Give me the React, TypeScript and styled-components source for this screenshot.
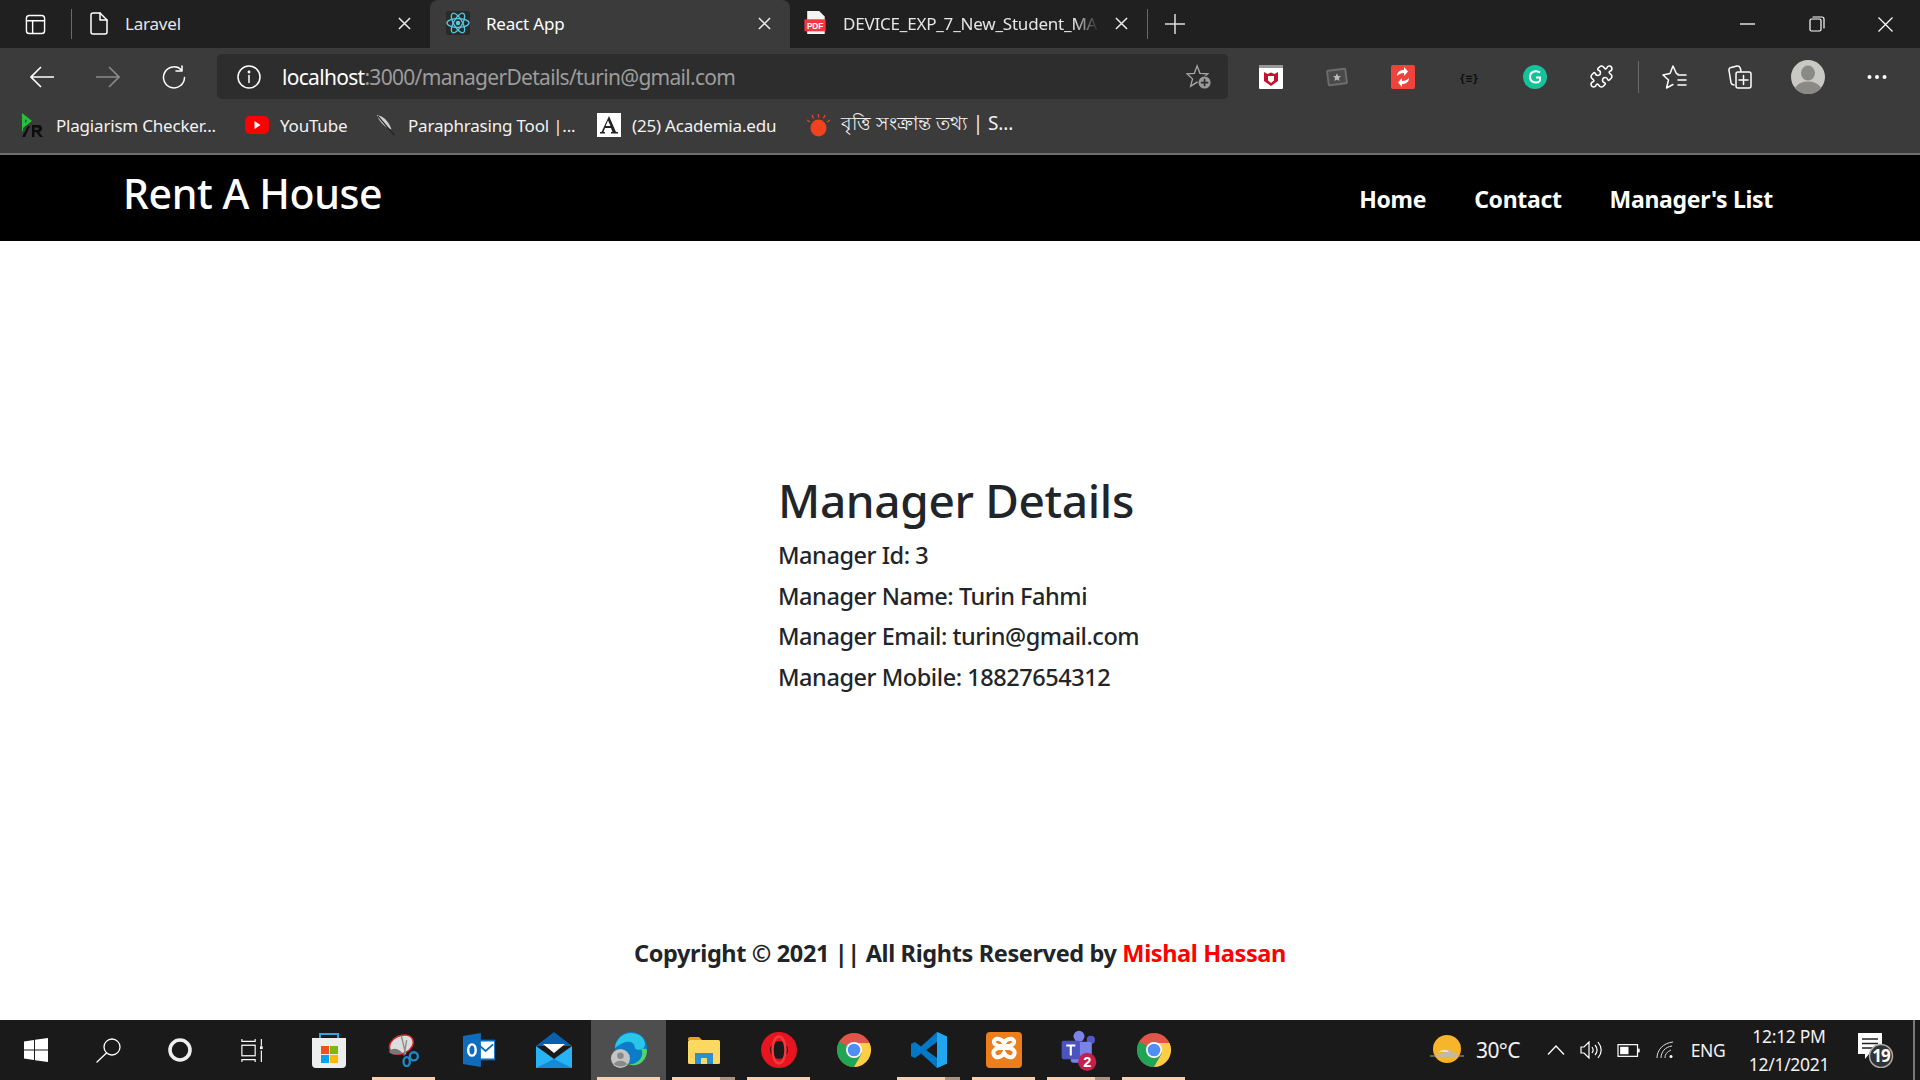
import React from "react";
import styled, { createGlobalStyle } from "styled-components";
import { Puzzle as PuzzleGlyph } from "lucide-react";

const Global = createGlobalStyle`
  html, body { margin: 0; padding: 0; background: #fff; }
  #root { width: 1920px; height: 1080px; overflow: hidden; }
  * { box-sizing: border-box; }
`;
const sans = `"Noto Sans", "Open Sans", "Liberation Sans", "DejaVu Sans", sans-serif`;

const Page = styled.div`
  width: 1920px; height: 1080px; display: flex; flex-direction: column;
  font-family: ${sans}; overflow: hidden;
`;
const TabStrip = styled.div`
  height: 48px; background: #202020; display: flex; align-items: stretch; flex: none;
`;
const StripButton = styled.div<{ $w: number }>`
  width: ${p => p.$w}px; flex: none; display: flex; align-items: center; justify-content: center;
`;
const StripDivider = styled.div`
  width: 1px; height: 30px; background: #6a6a6a; align-self: center; flex: none;
`;
const Tab = styled.div<{ $active?: boolean; $w: number; $pad: number }>`
  width: ${p => p.$w}px; flex: none; display: flex; align-items: center;
  padding: 0 19px 2px ${p => p.$pad}px; gap: 16px; color: ${p => (p.$active ? "#fff" : "#e6e6e6")};
  background: ${p => (p.$active ? "#3b3b3b" : "transparent")};
  border-radius: 8px 8px 0 0; font-size: 17px; letter-spacing: -0.2px;
`;
const TabTitle = styled.span`
  flex: 1; white-space: nowrap; min-width: 0;
`;
const FadedTitle = styled(TabTitle)`
  -webkit-mask-image: linear-gradient(90deg, #000 90%, transparent 100%);
  mask-image: linear-gradient(90deg, #000 90%, transparent 100%);
`;
const Spacer = styled.div`flex: 1;`;
const Chrome = styled.div`
  height: 105px; background: #3b3b3b; flex: none; display: flex; flex-direction: column;
`;
const ToolRow = styled.div`
  height: 57px; padding: 6px 0 0 9px; display: flex; align-items: flex-start; flex: none;
`;
const NavIcon = styled.div`
  width: 66px; height: 45px; display: flex; align-items: center; justify-content: center; flex: none;
`;
const AddressBar = styled.div`
  margin-left: 10px; width: 1011px; height: 45px; background: #2d2d2d; border-radius: 5px; flex: none;
  display: flex; align-items: center; padding: 0 16px 0 20px; margin-right: 10px;
`;
const UrlText = styled.div`
  margin-left: 21px; flex: 1; font-size: 21px; letter-spacing: -0.7px; color: #9c9c9c; white-space: nowrap;
`;
const UrlHost = styled.span`color: #fff;`;
const ExtIcon = styled.div<{ $w?: number }>`
  width: ${p => p.$w ?? 66}px; height: 45px; display: flex; align-items: center; justify-content: center; flex: none;
`;
const ToolDivider = styled.div`
  width: 1px; height: 32px; background: #6a6a6a; margin: 7px 2px 0 4px; flex: none;
`;
const Bookmarks = styled.div`
  height: 48px; padding: 0 0 8px 20px; display: flex; align-items: center; flex: none;
`;
const Bookmark = styled.div<{ $w: number }>`
  width: ${p => p.$w}px; flex: none; display: flex; align-items: center; gap: 11px;
  color: #f2f2f2; font-size: 17px; letter-spacing: -0.2px; white-space: nowrap;
`;
const BengaliTitle = styled.span`font-size: 19px; letter-spacing: -0.1px;`;
const ChromeEdge = styled.div`height: 2px; background: #6e6e6e; flex: none;`;
const Navbar = styled.nav`
  height: 86px; background: #000; color: #fff; display: flex; align-items: flex-start; flex: none;
  padding: 0 147px 0 123px;
`;
const Brand = styled.div`
  font-size: 41px; font-weight: 500; letter-spacing: -0.4px; line-height: 52px; margin-top: 12px; flex: 1;
`;
const NavLinks = styled.div`
  display: flex; gap: 48px; margin-top: 26px;
`;
const NavLink = styled.a`
  color: #fff; font-size: 23px; font-weight: 700; letter-spacing: -0.32px; line-height: 36px; white-space: nowrap;
`;
const Main = styled.main`
  flex: 1; background: #fff; display: flex; flex-direction: column; color: #212529;
`;
const Details = styled.section`
  padding: 229px 0 0 778px; flex: 1;
`;
const Heading = styled.h1`
  margin: 0 0 5px; font-size: 46px; font-weight: 500; line-height: 60px; letter-spacing: -0.35px;
`;
const DetailLine = styled.p`
  margin: 0; font-size: 23.5px; line-height: 40.6px; letter-spacing: -0.45px; font-weight: 500; white-space: nowrap;
`;
const Footer = styled.footer`
  text-align: center; font-size: 23.5px; font-weight: 700; line-height: 36px; letter-spacing: -0.37px;
  height: 85px; flex: none;
`;
const Credit = styled.span`color: #f00;`;
const Taskbar = styled.div`
  height: 60px; background: #1a1a1a; flex: none; display: flex; align-items: stretch; color: #f2f2f2;
`;
const SysButton = styled.div`
  width: 72px; flex: none; display: flex; align-items: center; justify-content: center;
`;
const TaskGap = styled.div`width: 3px; flex: none;`;
const TaskApp = styled.div<{ $active?: boolean; $open?: boolean; $stack?: boolean }>`
  width: 75px; flex: none; display: flex; align-items: center; justify-content: center;
  padding-top: 3px;
  background: ${p => (p.$active ? "#4e4e4e" : "transparent")};
  border-bottom: 3px solid transparent;
  border-image: ${p =>
    p.$open
      ? p.$stack
        ? "linear-gradient(90deg, transparent 7px, #f7cfb1 7px, #f7cfb1 54px, #a99382 54px, #a99382 68px, transparent 68px) 1"
        : "linear-gradient(90deg, transparent 7px, #f7cfb1 7px, #f7cfb1 68px, transparent 68px) 1"
      : "none"};
`;
const Tray = styled.div`
  flex: 1; display: flex; align-items: center; justify-content: flex-end; padding-right: 5px;
`;
const TrayItem = styled.div<{ $w: number; $after?: number }>`
  width: ${p => p.$w}px; flex: none; display: flex; align-items: center; justify-content: center;
  margin-right: ${p => p.$after ?? 0}px;
`;
const Temp = styled.span`font-size: 21px; letter-spacing: -0.6px; white-space: nowrap;`;
const Lang = styled.span`font-size: 17.5px; letter-spacing: -0.5px;`;
const Clock = styled.div`
  width: 112px; flex: none; display: flex; flex-direction: column; align-items: center;
  font-size: 17.5px; letter-spacing: -0.3px; line-height: 28px; white-space: nowrap;
`;
const TrayEdge = styled.div`width: 2px; height: 60px; background: #777; flex: none; margin-left: 4px;`;

const S = { fill: "none", stroke: "#fff", strokeWidth: 1.5, strokeLinecap: "round" as const, strokeLinejoin: "round" as const };
const Close = () => (<svg width="13" height="13" viewBox="0 0 14 14" style={{ flex: "none" }}><path d="M1 1l12 12M13 1L1 13" stroke="#eee" strokeWidth="1.6" /></svg>);
const TabsIcon = () => (<svg width="21" height="21" viewBox="0 0 22 22" {...S}><rect x="1.5" y="1.500" width="19" height="19" rx="3" /><path d="M1.5 7h19M8 7v13.500" /></svg>);
const DocIcon = () => (<svg width="20" height="23" viewBox="0 0 18 23" {...S} style={{ flex: "none" }}><path d="M3 1h7l7 7v12a2 2 0 0 1-2 2H3a2 2 0 0 1-2-2V3a2 2 0 0 1 2-2z" /><path d="M10 1v7h7" /></svg>);
const ReactIcon = () => (<svg width="24" height="24" viewBox="0 0 24 24" style={{ flex: "none" }}><rect width="24" height="24" rx="2" fill="#2a2a2a" /><g fill="none" stroke="#55c8e4" strokeWidth="1.3"><ellipse cx="12" cy="12" rx="11" ry="4.3" /><ellipse cx="12" cy="12" rx="11" ry="4.3" transform="rotate(60 12 12)" /><ellipse cx="12" cy="12" rx="11" ry="4.3" transform="rotate(120 12 12)" /></g><circle cx="12" cy="12" r="2.2" fill="#55c8e4" /></svg>);
const PdfIcon = () => (<svg width="23" height="24" viewBox="0 0 24 26" style={{ flex: "none" }}><path d="M3 0h13l6 6v19H3z" fill="#f4f4f4" /><rect y="9" width="23" height="13" fill="#f5353f" /><text x="11.5" y="19" fontSize="9" fontWeight="700" fill="#fff" textAnchor="middle" fontFamily="Liberation Sans">PDF</text></svg>);
const Plus = () => (<svg width="20" height="20" viewBox="0 0 20 20"><path d="M10 0v20M0 10h20" stroke="#ddd" strokeWidth="1.5" /></svg>);
const WinMin = () => (<svg width="15" height="2"><path d="M0 1h15" stroke="#fff" strokeWidth="1.3" /></svg>);
const WinMax = () => (<svg width="16" height="16" viewBox="0 0 16 16" {...S} strokeWidth={1.2}><rect x="1" y="3" width="11" height="12" rx="1.5" /><path d="M4 1h9a2 2 0 0 1 2 2v9" /></svg>);
const WinClose = () => (<svg width="15" height="15" viewBox="0 0 15 15"><path d="M.5.5l14 14M14.500.5l-14 14" stroke="#fff" strokeWidth="1.2" /></svg>);
const Back = ({ c = "#fff" }: { c?: string }) => (<svg width="24" height="22" viewBox="0 0 24 22" fill="none" stroke={c} strokeWidth="1.6"><path d="M1 11h23M11 1L1 11l10 10" /></svg>);
const Forward = () => (<svg width="24" height="22" viewBox="0 0 24 22" fill="none" stroke="#8a8a8a" strokeWidth="1.6"><path d="M23 11H0M13 1l10 10-10 10" /></svg>);
const Refresh = () => (<svg width="24" height="24" viewBox="0 0 24 24" {...S}><path d="M19.500 5A10.500 10.500 0 1 0 22.500 12.500" /><path d="M20 1v5h-6" /></svg>);
const Info = () => (<svg width="24" height="24" viewBox="0 0 24 24" {...S} style={{ flex: "none" }}><circle cx="12" cy="12" r="11" /><path d="M12 10.5v7" /><circle cx="12" cy="7" r=".7" fill="#fff" /></svg>);
const FavAdd = () => (<svg width="26" height="26" viewBox="0 0 28 28" style={{ flex: "none" }}><path d="M12 2l3 8 8.500.5-6.500 5.500 2 8-7-4.500-7 4.500 2-8L1 10.500 9 10z" fill="none" stroke="#a8a8a8" strokeWidth="1.4" /><circle cx="20" cy="20" r="7" fill="#9a9a9a" stroke="#2d2d2d" /><path d="M20 16v8M16 20h8" stroke="#2d2d2d" strokeWidth="1.8" /></svg>);
const PR = () => (<svg width="25" height="25" viewBox="0 0 25 25" style={{ flex: "none" }}><path d="M2 0l10 8-9 7v3H2z" fill="#25c13c" /><path d="M5 6l2 2-2 2z" fill="#3b3b3b" /><path d="M2 24l6-11h2L5 24z" fill="#0d0d0d" /><path d="M12 24V12h6a3.500 3.500 0 0 1 1 7l4 5h-3l-4-5h-1.500v5zM14.500 14.500v2.500h3a1.200 1.200 0 0 0 0-2.500z" fill="#0d0d0d" /></svg>);
const YT = () => (<svg width="24" height="18" viewBox="0 0 24 18" style={{ flex: "none" }}><rect width="24" height="18" rx="5" fill="#f00" /><path d="M9.500 5l6 4-6 4z" fill="#fff" /></svg>);
const Quill = () => (<svg width="22" height="22" viewBox="0 0 24 24" style={{ flex: "none" }}><path d="M2 1c8 1 14 9 16 16-6-2-13-8-16-16z" fill="#d0d0d0" /><path d="M3 2l18 21" stroke="#222" strokeWidth="1.4" /></svg>);
const AIcon = () => (<svg width="24" height="24" viewBox="0 0 24 24" style={{ flex: "none" }}><rect width="24" height="24" fill="#fff" /><path d="M12 3l7 16h2v1.500h-7V19h1.500l-1.500-4H8l-1.500 4H8v1.500H3V19h1.500zM11 7.500L8.700 13h4.800z" fill="#222" /></svg>);
const Bulb = () => (<svg width="23" height="23" viewBox="0 0 23 23" style={{ flex: "none" }}><ellipse cx="11.500" cy="14" rx="8" ry="8.500" fill="#f0421f" /><path d="M11.500 0v3.500M5 1l1.500 3.500M18 1l-1.500 3.500M0 6l3 2M23 6l-3 2" stroke="#f0421f" strokeWidth="1.3" /></svg>);
const McAfee = () => (<svg width="24" height="24" viewBox="0 0 24 24"><rect width="24" height="24" rx="1" fill="#fff" /><rect width="24" height="3" fill="#999" /><path d="M5 7l3.500 2L12 7.500 15.500 9 19 7v9l-7 5-7-5z" fill="#c8102e" /><path d="M9 11h6v4.500L12 18l-3-2.500z" fill="#fff" /></svg>);
const StarPhoto = () => (<svg width="22" height="22" viewBox="0 0 24 24"><rect x="2" y="4" width="20" height="16" rx="1" fill="#4a4a4a" stroke="#6d6d6d" strokeWidth="2" transform="rotate(-7 12 12)" /><path d="M12 8l1.300 3 3.200.2-2.500 2 .9 3.100-2.900-1.700-2.900 1.700.9-3.100-2.500-2 3.200-.2z" fill="#bbb" /></svg>);
const SyncRed = () => (<svg width="24" height="24" viewBox="0 0 24 24"><rect width="24" height="24" rx="2" fill="#f1423c" /><path d="M6 11c0-4 3-6 7-6V2l4 4.500-4 4.500V8c-3 0-5 1-7 3zM18 13c0 4-3 6-7 6v3l-4-4.500L11 13v3c3 0 5-1 7-3z" fill="#fff" /></svg>);
const Braces = () => (<svg width="22" height="14" viewBox="0 0 22 14"><text x="11" y="11.500" fontSize="11" fontWeight="700" textAnchor="middle" fill="#0d0d0d" fontFamily="DejaVu Sans Mono">{"{≡}"}</text></svg>);
const Grammarly = () => (<svg width="24" height="24" viewBox="0 0 24 24"><circle cx="12" cy="12" r="12" fill="#15c39a" /><path d="M17 7.500c-3-2.500-10-1.500-10 4.500s8 7 10 3.500V12.500h-4" fill="none" stroke="#fff" strokeWidth="2" /></svg>);
const FavStar = () => (<svg width="25" height="24" viewBox="0 0 25 24" {...S}><path d="M16 9l-1.500-.3L11 1 8 8.500 1 10l5.500 5-2 8 6.500-3.500" /><path d="M16 10h8M16 15h8M16 20h8" /></svg>);
const Collections = () => (<svg width="24" height="25" viewBox="0 0 24 25" {...S}><path d="M6 21c-1.500 0-2.500-.8-3-2.300L1 6.500C.7 5 1.500 3.800 3 3.400L9 2c1.500-.3 2.800.5 3.200 2l.8 3" /><rect x="8" y="8" width="15" height="16" rx="2" /><path d="M15.500 11.500v9M11 16h9" /></svg>);
const Profile = () => (<svg width="34" height="34" viewBox="0 0 34 34"><circle cx="17" cy="17" r="17" fill="#c8c8c4" /><ellipse cx="17" cy="13" rx="7" ry="7.500" fill="#8a8986" /><path d="M4 28c3-5 8-6.500 13-6.500S27 23 30 28c-3 4-8 6-13 6S7 32 4 28z" fill="#8a8986" /></svg>);
const More = () => (<svg width="20" height="6" viewBox="0 0 20 6" fill="#fff"><circle cx="2.500" cy="3" r="2" /><circle cx="10" cy="3" r="2" /><circle cx="17.500" cy="3" r="2" /></svg>);

const WinLogo = () => (<svg width="24" height="24" viewBox="0 0 24 24" fill="#fff"><path d="M0 3.500l10-1.500v9.500H0zM11 1.800L24 0v11.500H11zM0 12.500h10V22L0 20.500zM11 12.500h13V24l-13-1.800z" /></svg>);
const Search = () => (<svg width="25" height="25" viewBox="0 0 25 25" {...S} strokeWidth={1.3}><circle cx="16" cy="9" r="8" /><path d="M10.500 15L1 24" /></svg>);
const Cortana = () => (<svg width="24" height="24" viewBox="0 0 24 24"><circle cx="12" cy="12" r="10" fill="none" stroke="#eee" strokeWidth="3.600" /></svg>);
const TaskView = () => (<svg width="23" height="23" viewBox="0 0 26 24" preserveAspectRatio="none" fill="none" stroke="#fff" strokeWidth="1.300"><path d="M1 0v2.500h15V0M1 24v-2.500h15V24" /><rect x="1" y="6.500" width="15" height="11" /><path d="M23 0v7M23 12v12" /><rect x="21.500" y="7.500" width="3" height="3" fill="#fff" stroke="none" /></svg>);
const Store = () => (<svg width="36" height="36" viewBox="0 0 36 36"><path d="M9 7V2h18v5" fill="none" stroke="#2ba8e8" strokeWidth="2" /><path d="M1 6h34v26a4 4 0 0 1-4 4H5a4 4 0 0 1-4-4z" fill="#eee" /><rect x="10" y="14" width="8" height="8" fill="#f25022" /><rect x="19" y="14" width="8" height="8" fill="#7fba00" /><rect x="10" y="23" width="8" height="8" fill="#00a4ef" /><rect x="19" y="23" width="8" height="8" fill="#ffb900" /></svg>);
const Snip = () => (<svg width="34" height="34" viewBox="0 0 36 38"><ellipse cx="15" cy="13" rx="14" ry="10" fill="#ddd" stroke="#d8232a" strokeWidth="1.600" transform="rotate(-25 15 13)" /><path d="M1 21c4-5 10-4 15 1-6 3-12 3-15-1z" fill="#777" /><path d="M15 3l5 21M21 8l-3 17" stroke="#8a8a8a" strokeWidth="1.500" /><circle cx="29" cy="26" r="4.500" fill="none" stroke="#1e88c8" strokeWidth="2.600" /><ellipse cx="21" cy="32" rx="3.500" ry="5" fill="none" stroke="#1e88c8" strokeWidth="2.600" /></svg>);
const Outlook = () => (<svg width="32" height="34" viewBox="0 0 34 36"><rect x="14" y="8" width="20" height="20" fill="#fff" stroke="#0f6cbd" strokeWidth="2" /><path d="M16 12l8 7 8-7" fill="none" stroke="#0f6cbd" strokeWidth="2" /><path d="M0 3l19-3v36L0 33z" fill="#0f6cbd" /><ellipse cx="9.500" cy="18" rx="4" ry="6" fill="none" stroke="#fff" strokeWidth="2.600" /></svg>);
const Mail = () => (<svg width="36" height="36" viewBox="0 0 36 36"><path d="M0 14L18 0l18 14z" fill="#0a5fae" /><path d="M7 12h22l-11 9z" fill="#fff" /><path d="M0 14l18 13 18-13v22H0z" fill="#28b4f4" /><path d="M0 36l18-9 18 9z" fill="#1489d6" /></svg>);
const Edge = () => (<svg width="38" height="38" viewBox="0 0 40 40"><circle cx="22" cy="18" r="17" fill="#0c7bc8" /><path d="M5 18C7 5 20-2 32 5c6 4 6 12 2 14-4 2-8 0-8-2 0-5-6-7-11-5C10 14 6 17 5 18z" fill="#29c6e8" /><path d="M39 20c0 12-10 19-20 15 8 1 18-6 14-16 2 0 5-1 6 1z" fill="#4ad66d" /><circle cx="11" cy="29" r="10" fill="#c4c4c4" /><circle cx="11" cy="26" r="3.500" fill="#8a8a8a" /><path d="M4 35c2-5 12-5 14 0-3 3-10 3-14 0z" fill="#8a8a8a" /></svg>);
const Folder = () => (<svg width="32" height="27" viewBox="0 0 32 27"><path d="M0 2a2 2 0 0 1 2-2h9l3 3H0z" fill="#e2a70f" /><rect y="3" width="32" height="24" rx="1.500" fill="#fbd860" /><path d="M7 27V16h18v11h-6v-6h-6v6z" fill="#2b8fd8" /></svg>);
const Opera = () => (<svg width="36" height="36" viewBox="0 0 36 36"><ellipse cx="18" cy="18" rx="13.500" ry="13.500" fill="none" stroke="#e8141f" strokeWidth="9" /><ellipse cx="18" cy="18" rx="6.500" ry="13.500" fill="none" stroke="#f33a40" strokeWidth="2.500" /></svg>);
const ChromeLogo = () => (<svg width="34" height="34" viewBox="0 0 34 34"><circle cx="17" cy="17" r="17" fill="#e0574a" /><path d="M17 17L2.300 8.500A17 17 0 0 0 17 34l8.500-14.700z" fill="#22a455" /><path d="M17 10h15.500A17 17 0 0 1 17 34l8-14z" fill="#fccf47" /><circle cx="17" cy="17" r="8" fill="#fff" /><circle cx="17" cy="17" r="6.300" fill="#4f8ef5" /></svg>);
const VSCode = () => (<svg width="36" height="36" viewBox="0 0 36 40" preserveAspectRatio="none"><path d="M26 0l10 5v30l-10 5-16-16-6 5-4-2v-14l4-2 6 5z" fill="#0078c8" /><path d="M26 0l10 5v30l-10 5z" fill="#22a7ef" /><path d="M26 11v18l-11-9z" fill="#1a1a1a" /></svg>);
const Xampp = () => (<svg width="36" height="36" viewBox="0 0 36 36"><rect width="36" height="36" rx="4" fill="#ee7d1c" /><path d="M18 11c-2-4-8-6-10-2-1 3 2 4 4 5h5v2h-5c-3 1-6 3-4 7 2 4 8 2 10-2 2 4 8 6 10 2 2-4-1-6-4-7h-5v-2h5c2-1 5-2 4-5-2-4-8-2-10 2z" fill="none" stroke="#fff" strokeWidth="4" /></svg>);
const Teams = () => (<svg width="40" height="42" viewBox="0 0 42 46"><circle cx="34" cy="12" r="4.500" fill="#5059c9" /><circle cx="21" cy="8" r="6" fill="#7b83eb" /><rect x="12" y="14" width="23" height="23" rx="3" fill="#7b83eb" /><rect x="2" y="13" width="20" height="20" rx="2" fill="#4b53bc" /><path d="M7 18h10M12 18v11" stroke="#fff" strokeWidth="2.300" /><circle cx="30" cy="36" r="10" fill="#c4204c" /><text x="30" y="42" fontSize="16" fontWeight="700" fill="#fff" textAnchor="middle" fontFamily="Liberation Sans">2</text></svg>);
const Weather = () => (<svg width="34" height="32" viewBox="0 0 34 32"><circle cx="17" cy="15" r="14" fill="#f7b52c" /><path d="M0 22h34" stroke="#b9a68a" strokeWidth="1" /><path d="M6 23c0-3 4-5 7-3 2-5 9-5 11-1 3 0 4 2 4 4z" fill="#c9b8a0" /><path d="M9 18c3-3 8-3 10 0z" fill="#efe4d2" /></svg>);
const Caret = () => (<svg width="18" height="10" viewBox="0 0 18 10" fill="none" stroke="#fff" strokeWidth="1.300"><path d="M1 9.500l8-8.500 8 8.500" /></svg>);
const Speaker = () => (<svg width="22" height="18" viewBox="0 0 22 18" fill="none" stroke="#fff" strokeWidth="1.200"><path d="M1 6h3l5-5v16l-5-5H1zM12 6c1.500 2 1.500 4 0 6M15 4c2.500 3 2.500 7 0 10M18 1c4 5 4 11 0 16" /></svg>);
const Battery = () => (<svg width="23" height="13" viewBox="0 0 24 14"><rect x=".7" y=".7" width="21" height="12.600" fill="none" stroke="#fff" strokeWidth="1.300" /><rect x="3" y="3" width="9" height="8" fill="#fff" /><rect x="22" y="5" width="2" height="4" fill="#fff" /></svg>);
const Wifi = () => (<svg width="18" height="18" viewBox="0 0 18 18" fill="none" stroke="#ddd" strokeWidth="1"><path d="M1 17C1 9 7 2 17 1M5 17C5 11 9 6 16 5M9 17c0-4 2-6 6-8" /><circle cx="15" cy="15.500" r="1.500" fill="#fff" stroke="none" /></svg>);
const Notify = () => (<svg width="40" height="36" viewBox="0 0 40 36"><path d="M1 1h24v21H12l-4 5v-5H1z" fill="#fff" /><path d="M5 7h16M5 11.500h16M5 16h13" stroke="#222" strokeWidth="1.300" /><circle cx="24" cy="24" r="11.500" fill="#333" stroke="#aaa" strokeWidth="1.500" /><text x="24" y="30" textAnchor="middle" fontSize="17" fontWeight="700" fill="#fff" fontFamily="Noto Sans" letterSpacing="-1">19</text></svg>);

const apps = [
  { I: Store }, { I: Snip, open: true }, { I: Outlook }, { I: Mail },
  { I: Edge, open: true, active: true }, { I: Folder, open: true, stack: true },
  { I: Opera, open: true }, { I: ChromeLogo }, { I: VSCode, open: true, stack: true },
  { I: Xampp, open: true }, { I: Teams, open: true, stack: true }, { I: ChromeLogo, open: true },
];

export default function App() {
  return (
    <Page>
      <Global />
      <TabStrip>
        <StripButton $w={71}><TabsIcon /></StripButton>
        <StripDivider />
        <Tab $w={358} $pad={17}><DocIcon /><TabTitle>Laravel</TabTitle><Close /></Tab>
        <Tab $active $w={360} $pad={16}><ReactIcon /><TabTitle>React App</TabTitle><Close /></Tab>
        <Tab $w={357} $pad={14}><PdfIcon /><FadedTitle>DEVICE_EXP_7_New_Student_MA</FadedTitle><Close /></Tab>
        <StripDivider />
        <StripButton $w={53}><Plus /></StripButton>
        <Spacer />
        <StripButton $w={69}><WinMin /></StripButton>
        <StripButton $w={69}><WinMax /></StripButton>
        <StripButton $w={69}><WinClose /></StripButton>
      </TabStrip>
      <Chrome>
        <ToolRow>
          <NavIcon><Back /></NavIcon>
          <NavIcon><Forward /></NavIcon>
          <NavIcon><Refresh /></NavIcon>
          <AddressBar>
            <Info />
            <UrlText><UrlHost>localhost</UrlHost>:3000/managerDetails/turin@gmail.com</UrlText>
            <FavAdd />
          </AddressBar>
          <ExtIcon><McAfee /></ExtIcon>
          <ExtIcon><StarPhoto /></ExtIcon>
          <ExtIcon><SyncRed /></ExtIcon>
          <ExtIcon><Braces /></ExtIcon>
          <ExtIcon><Grammarly /></ExtIcon>
          <ExtIcon><PuzzleGlyph size={25} color="#fff" strokeWidth={1.5} /></ExtIcon>
          <ToolDivider />
          <ExtIcon><FavStar /></ExtIcon>
          <ExtIcon><Collections /></ExtIcon>
          <ExtIcon $w={70}><Profile /></ExtIcon>
          <ExtIcon $w={68}><More /></ExtIcon>
        </ToolRow>
        <Bookmarks>
          <Bookmark $w={225}><PR />Plagiarism Checker...</Bookmark>
          <Bookmark $w={130}><YT />YouTube</Bookmark>
          <Bookmark $w={222}><Quill />Paraphrasing Tool |...</Bookmark>
          <Bookmark $w={210}><AIcon />(25) Academia.edu</Bookmark>
          <Bookmark $w={240}><Bulb /><BengaliTitle>বৃত্তি সংক্রান্ত তথ্য | S...</BengaliTitle></Bookmark>
        </Bookmarks>
      </Chrome>
      <ChromeEdge />
      <Navbar>
        <Brand>Rent A House</Brand>
        <NavLinks>
          <NavLink>Home</NavLink>
          <NavLink>Contact</NavLink>
          <NavLink>Manager's List</NavLink>
        </NavLinks>
      </Navbar>
      <Main>
        <Details>
          <Heading>Manager Details</Heading>
          <DetailLine>Manager Id: 3</DetailLine>
          <DetailLine>Manager Name: Turin Fahmi</DetailLine>
          <DetailLine>Manager Email: turin@gmail.com</DetailLine>
          <DetailLine>Manager Mobile: 18827654312</DetailLine>
        </Details>
        <Footer>Copyright © 2021 || All Rights Reserved by <Credit>Mishal Hassan</Credit></Footer>
      </Main>
      <Taskbar>
        <SysButton><WinLogo /></SysButton>
        <SysButton><Search /></SysButton>
        <SysButton><Cortana /></SysButton>
        <SysButton><TaskView /></SysButton>
        <TaskGap />
        {apps.map(({ I, open, active, stack }, i) => (
          <TaskApp key={i} $open={open} $active={active} $stack={stack}><I /></TaskApp>
        ))}
        <Tray>
          <TrayItem $w={42}><Weather /></TrayItem>
          <TrayItem $w={60} $after={13}><Temp>30°C</Temp></TrayItem>
          <TrayItem $w={30}><Caret /></TrayItem>
          <TrayItem $w={39}><Speaker /></TrayItem>
          <TrayItem $w={37}><Battery /></TrayItem>
          <TrayItem $w={36}><Wifi /></TrayItem>
          <TrayItem $w={50}><Lang>ENG</Lang></TrayItem>
          <Clock><span>12:12 PM</span><span>12/1/2021</span></Clock>
          <TrayItem $w={64}><Notify /></TrayItem>
          <TrayEdge />
        </Tray>
      </Taskbar>
    </Page>
  );
}
